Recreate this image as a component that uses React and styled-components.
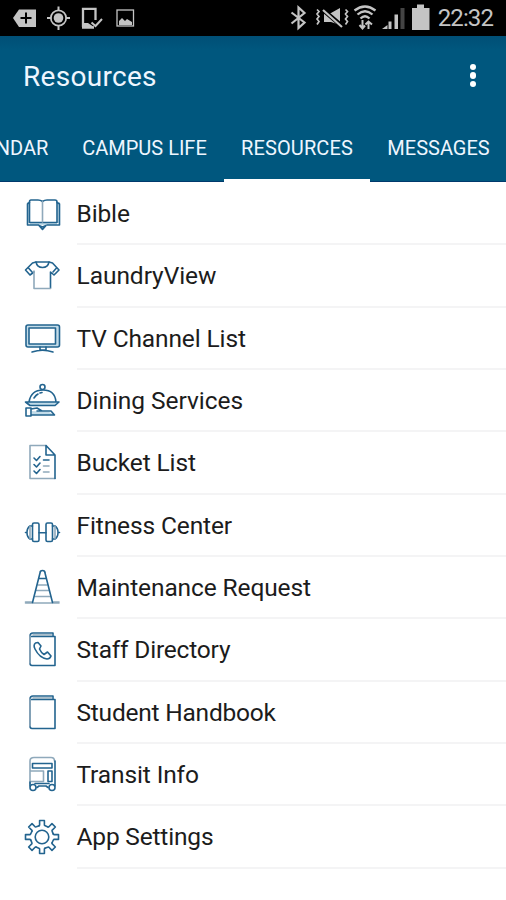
import React from "react";
import styled, { createGlobalStyle } from "styled-components";

const GlobalStyle = createGlobalStyle`
  * {
    box-sizing: border-box;
  }
  body {
    margin: 0;
    background: #fff;
    font-family: Roboto, "Liberation Sans", sans-serif;
  }
`;

const Screen = styled.div`
  width: 506px;
  height: 900px;
  overflow: hidden;
  background: #fff;
`;

const StatusBar = styled.div`
  display: flex;
  align-items: center;
  justify-content: space-between;
  height: 36px;
  padding-right: 13px;
  background: #000;
  color: #c4c4c4;
`;

const StatusGroup = styled.div`
  display: flex;
  align-items: center;
`;

const StatusIcon = styled.svg`
  display: block;
  flex: none;
  height: 36px;
`;

const Clock = styled.span`
  font-size: 24px;
  line-height: 36px;
  letter-spacing: -0.9px;
`;

const AppBar = styled.header`
  height: 146px;
  background: linear-gradient(#004f76, #00577e 14px);
  border-bottom: 1px solid #003a6c;
  color: #eef6ff;
`;

const TitleRow = styled.div`
  display: flex;
  align-items: center;
  justify-content: space-between;
  height: 79px;
  padding: 0 30px 0 23px;
`;

const Title = styled.h1`
  margin: 2px 0 0;
  font-size: 28px;
  font-weight: 400;
  line-height: 36px;
  letter-spacing: 0.3px;
`;

const MoreButton = styled.button`
  display: flex;
  flex-direction: column;
  gap: 2px;
  padding: 0;
  border: 0;
  background: none;
`;

const Dot = styled.span`
  width: 6.5px;
  height: 6.5px;
  border-radius: 50%;
  background: #fff;
`;

const Tabs = styled.nav`
  display: flex;
  justify-content: flex-end;
  height: 67px;
  margin-right: -1px;
`;

const Tab = styled.a`
  flex: none;
  width: ${(props) => props.$width}px;
  height: 67px;
  border-bottom: 3px solid ${(props) => (props.$active ? "#fff" : "transparent")};
  font-size: 20px;
  line-height: 66px;
  letter-spacing: ${(props) => props.$spacing || 0}px;
  text-align: center;
  white-space: nowrap;
`;

const List = styled.ul`
  margin: 0;
  padding: 0.8px 0 0;
  list-style: none;
`;

const Row = styled.li`
  display: flex;
  align-items: center;
  height: 62.36px;
  padding-left: 22px;
`;

const RowIcon = styled.svg`
  flex: none;
  width: 40px;
  height: 40px;
  margin-right: 14.5px;
  fill: none;
  stroke: #23648f;
  stroke-width: 1.6;
  stroke-linecap: round;
  stroke-linejoin: round;

  .soft {
    stroke: #8fa9bb;
  }
  .tint {
    fill: #c3dce9;
    stroke: none;
  }
`;

const RowLabel = styled.span`
  flex: 1;
  height: 100%;
  padding-top: 1px;
  border-bottom: 2px solid #f4f4f5;
  color: #1c1c1c;
  font-size: 24.5px;
  line-height: 60px;
  letter-spacing: ${(props) => props.$spacing ?? -0.12}px;
`;

const BibleIcon = () => (
  <>
    <path className="tint" d="M5 8h3v21H5zM35 8h3v21h-3zM8 28h27v3H8z" />
    <path d="M20.5 7.500Q18.500 6 16 6H9Q7.500 6 7.500 8v20.500H35V8q0-2-2-2h-8q-2.500 0-4.500 1.500Z" />
    <path className="soft" d="M20.500 7.500V28" />
    <path d="M7.500 8.500L5.500 10V31H16.500M35 8.500l2.500 1.500V31H25" />
    <path d="M17 31.500l3.500 4l3.500-4L20.500 33Z" />
  </>
);

const ShirtIcon = () => (
  <>
    <path d="M14 6L10.500 7L3.500 14L8 19L12 16M27 6l3.500 1L37 14l-5 5l-3.500-3V32" />
    <path className="soft" d="M12 15V32.500H28.500" />
    <path d="M14 6H27Q26 11.500 20.500 11.500T14 6Z" />
    <path d="M6.500 12l3.500 4M34.500 12L31 16" />
  </>
);

const TvIcon = () => (
  <>
    <rect className="tint" x="4" y="6" width="33.500" height="22" rx="2" />
    <rect x="4" y="6" width="33.500" height="22" rx="2" />
    <rect x="7" y="9" width="26.500" height="16" fill="#fff" />
    <path d="M18 28v3h6v-3M10 33Q20.500 29.500 31 33" />
  </>
);

const DiningIcon = () => (
  <>
    <path className="tint" d="M5 21h31l-3 4H8zM10 30l17 1 6 3H10z" />
    <path d="M7 21Q9 9 21 9T34 21M3.500 21H37L33 24.500H8Z" />
    <circle cx="20.500" cy="6" r="2.500" />
    <path d="M12 17q2-3 4-4M18 12l2-.500" />
    <path d="M4 27h5v8H4zM9 28l6-1l5 3h9l3.500 4H9M15 30h6" />
  </>
);

const ChecklistIcon = () => (
  <>
    <path className="soft" d="M24 2.500H8V35.500H33" />
    <path d="M24 2.500L33 12V35.500M24 2.500V12h9Z" />
    <path d="M12 15l2.500 2.500L18 13.500M12 21.500l2.500 2.500L18 20M12 28l2.500 2.500L18 26.500M21.500 17H27" />
    <path className="soft" d="M21.500 23H27M21.500 29H27" />
  </>
);

const DumbbellIcon = () => (
  <>
    <rect x="10.500" y="17" width="6.500" height="18.500" rx="1.500" />
    <rect x="24" y="17" width="6.500" height="18.500" rx="1.500" />
    <path d="M10.500 20H8Q5 22 5 26.500T8 33h2.500M30.500 20H33q3 2 3 6.500T33 33h-2.500M3.500 26.500H5M36 26.500h1.500" />
    <path d="M8 20.500v12M33 20.500v12" className="soft" />
    <path d="M17 26.700H24" />
  </>
);

const ConeIcon = () => (
  <>
    <path className="soft" d="M3.500 35H37M13 28.500H28.500M14.500 22.500H27M16 17H25M3.500 34H9.500M31.500 34h5.500" />
    <path d="M10.500 34.500L18 5Q18 2.500 20.500 2.500T23 5L30.500 34.500M17 10.500H24" />
  </>
);

const BookIcon = () => (
  <>
    <path d="M8 6.500H33V35.500H10Q8 35.500 8 33Z" />
    <path d="M8 6.500Q8 3 11 3H31M31 3V6" />
    <path className="soft" d="M8 6V33M11 5H29.500" />
  </>
);

const DirectoryIcon = () => (
  <>
    <BookIcon />
    <path d="M13.500 13q-2.500 2-.500 6q4.500 9 12 10q3 0 4-3l-3.500-4l-3.500 2.500q-3-2-4.500-5.500l1.500-3L16 12.500Z" />
  </>
);

const BusIcon = () => (
  <>
    <path className="soft" d="M8 29V6Q8 2.500 12 2.500H29Q32.500 2.500 32.500 6M9 16H21.500V26.500H8" />
    <rect x="10.500" y="8.500" width="19.500" height="4.500" />
    <path d="M33 6V31M30 16H26V26.500h4M30 16v10.500M8 27v4M15 32.500l2-1.500h7l2 1.500M13 28.500h14" />
    <circle cx="11" cy="32.500" r="3" />
    <circle cx="30" cy="32.500" r="3" />
  </>
);

const toothAngles = [0, 45, 90, 135, 180, 225, 270, 315];

// one tooth and the rim up to the next one, repeated eight times
const GearIcon = () => (
  <>
    {toothAngles.map((angle) => (
      <path
        key={angle}
        transform={`rotate(${angle} 20 19)`}
        d="M16.800 7.800L17.600 7.200V2.500H22.400V7.200L23.200 7.800L26 9"
      />
    ))}
    <circle cx="20" cy="19" r="6.800" />
  </>
);

const tabs = [
  { label: "CALENDAR", width: 134 },
  { label: "CAMPUS LIFE", width: 159 },
  { label: "RESOURCES", width: 146, spacing: 0.1, active: true },
  { label: "MESSAGES", width: 137 },
];

const resources = [
  { label: "Bible", icon: BibleIcon },
  { label: "LaundryView", icon: ShirtIcon, spacing: -0.05 },
  { label: "TV Channel List", icon: TvIcon },
  { label: "Dining Services", icon: DiningIcon, spacing: -0.05 },
  { label: "Bucket List", icon: ChecklistIcon },
  { label: "Fitness Center", icon: DumbbellIcon },
  { label: "Maintenance Request", icon: ConeIcon },
  { label: "Staff Directory", icon: DirectoryIcon, spacing: -0.2 },
  { label: "Student Handbook", icon: BookIcon, spacing: -0.22 },
  { label: "Transit Info", icon: BusIcon },
  { label: "App Settings", icon: GearIcon, spacing: -0.18 },
];

const NotificationIcons = () => (
  <StatusIcon width="140" viewBox="0 0 140 36" fill="none" stroke="currentColor">
    <path fill="currentColor" stroke="none" d="M13 18L19 9.500H36V27H19Z" />
    <path stroke="#000" strokeWidth="2" d="M26 12.500v11M20.500 18h11" />
    <circle cx="58.500" cy="18" r="7.700" strokeWidth="1.700" />
    <circle cx="58.500" cy="18" r="4.800" fill="currentColor" stroke="none" />
    <path strokeWidth="2" d="M58.500 6.500V11M58.500 25.500V30M47 18h4.500M65.500 18H70" />
    <path strokeWidth="2.300" d="M83 27V8.800H95.500V20M82 27.500H94" />
    <path fill="currentColor" stroke="none" d="M83 23h5l6 4H83z" />
    <path strokeWidth="2" d="M91.500 22.500L95.500 26L102 19" />
    <rect x="117" y="10" width="16.500" height="16" strokeWidth="1.300" />
    <path fill="currentColor" stroke="none" d="M119 25v-4l3-3l3 3l2-2l5 3v3z" />
  </StatusIcon>
);

const SystemIcons = () => (
  <StatusIcon width="150" viewBox="288 0 150 36" fill="none" stroke="currentColor">
    <path strokeWidth="2.200" d="M291.500 12.500L304.500 22.500L298.500 28V7.500L304.500 13L291.500 23.500" />
    <path fill="currentColor" stroke="none" d="M324 13h7l9-5v17l-9-3h-7z" />
    <path stroke="#000" strokeWidth="4.500" d="M322 9L343 27" />
    <path strokeWidth="2.200" d="M323 10L342 27" />
    <path strokeWidth="1.700" d="M317 9.500l2 2l-2 2.500l2 2.500l-2 2.500l2 2.500l-2 3M345.500 9.500l2 2l-2 2.500l2 2.500l-2 2.500l2 2.500l-2 3" />
    <path strokeWidth="2.300" d="M354.500 10.500Q365 2.500 375.500 10.500M357.500 14.500Q365 8 372.500 14.500M360.500 18.500Q365 14 369.500 18.500" />
    <path strokeWidth="2" d="M362.500 20V28M359.500 25l3 3.500l2.500-3M368.500 29V21.500M365.500 24.500l3-3l3.500 3" />
    <path fill="currentColor" stroke="none" d="M382 29l5.500-4v4zM388.500 21.500h3V29h-3zM394.500 14.500h3.500V29h-3.500z" />
    <path fill="#444" stroke="none" d="M400.500 8h4V29h-4z" />
    <path fill="currentColor" stroke="none" d="M412 8h5V4.500h7V8h5.500V30H412z" />
  </StatusIcon>
);

const App = () => {
  return (
    <Screen>
      <GlobalStyle />
      <StatusBar>
        <NotificationIcons />
        <StatusGroup>
          <SystemIcons />
          <Clock>22:32</Clock>
        </StatusGroup>
      </StatusBar>
      <AppBar>
        <TitleRow>
          <Title>Resources</Title>
          <MoreButton aria-label="More">
            <Dot />
            <Dot />
            <Dot />
          </MoreButton>
        </TitleRow>
        <Tabs>
          {tabs.map((tab) => (
            <Tab key={tab.label} $width={tab.width} $spacing={tab.spacing} $active={tab.active}>
              {tab.label}
            </Tab>
          ))}
        </Tabs>
      </AppBar>
      <List>
        {resources.map(({ label, icon: Icon, spacing }) => (
          <Row key={label}>
            <RowIcon viewBox="0 0 40 40">
              <Icon />
            </RowIcon>
            <RowLabel $spacing={spacing}>{label}</RowLabel>
          </Row>
        ))}
      </List>
    </Screen>
  );
};

export default App;
